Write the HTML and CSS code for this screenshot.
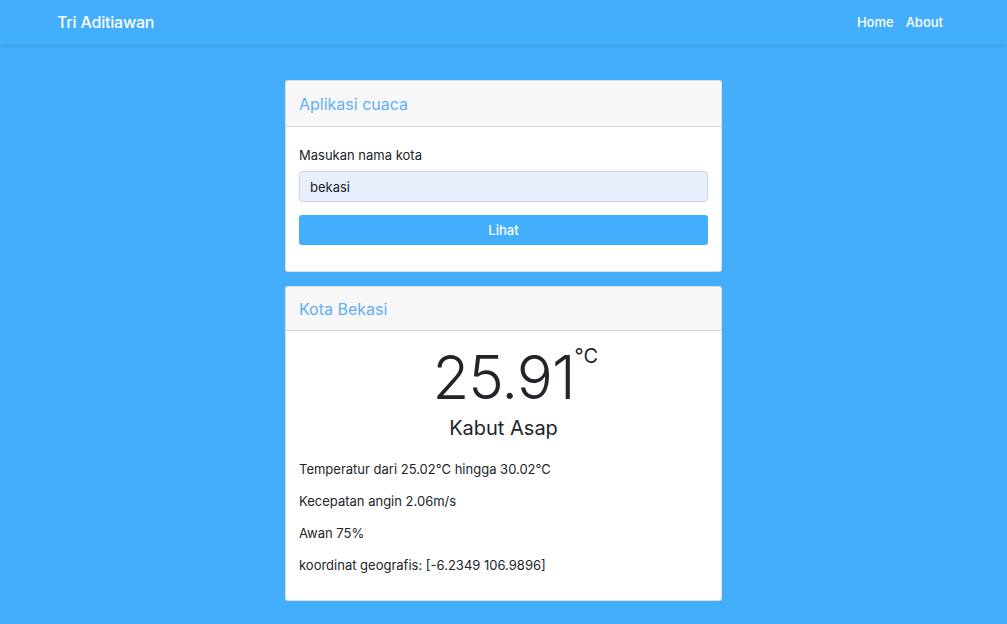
FILE: index.html
```html
<!DOCTYPE html>
<html lang="id">
<head>
<meta charset="utf-8">
<title>Aplikasi cuaca</title>
<link rel="stylesheet" href="styles.css">
</head>
<body>
<nav class="navbar">
  <div class="nav-inner">
    <a class="brand" href="#">Tri Aditiawan</a>
    <div class="nav-links">
      <a href="#">Home</a>
      <a href="#">About</a>
    </div>
  </div>
</nav>
<main class="main">
  <section class="card">
    <div class="card-header">Aplikasi cuaca</div>
    <div class="card-body form-body">
      <label class="label" for="kota">Masukan nama kota</label>
      <input class="input" id="kota" type="text" value="bekasi">
      <button class="btn" type="button">Lihat</button>
    </div>
  </section>
  <section class="card">
    <div class="card-header card-header-sm">Kota Bekasi</div>
    <div class="card-body result-body">
      <div class="temp"><span class="temp-value">25.91<span class="unit">°C</span></span></div>
      <div class="desc">Kabut Asap</div>
      <p class="info">Temperatur dari 25.02°C hingga 30.02°C</p>
      <p class="info">Kecepatan angin 2.06m/s</p>
      <p class="info">Awan 75%</p>
      <p class="info">koordinat geografis: [-6.2349 106.9896]</p>
    </div>
  </section>
</main>
</body>
</html>
```
FILE: styles.css
```css
* { box-sizing: border-box; }
html, body { margin: 0; }
body {
  background: #43aefb;
  font-family: Inter, "Noto Sans", sans-serif;
  color: #212529;
  font-size: 13px;
  height: 624px;
  overflow: hidden;
}
.navbar {
  height: 44px;
  background: #43aefb;
  box-shadow: 0 2px 4px rgba(0, 0, 0, 0.08);
}
.nav-inner {
  height: 100%;
  padding: 0 64px 0 57px;
  display: flex;
  align-items: center;
  justify-content: space-between;
}
.brand {
  color: #fff;
  text-decoration: none;
  font-size: 16px;
  font-weight: 500;
  letter-spacing: -0.2px;
}
.nav-links { display: flex; gap: 12px; }
.nav-links a {
  color: #fff;
  text-decoration: none;
  font-size: 13px;
  font-weight: 500;
}
.main {
  width: 437px;
  margin: 36px auto 0;
  display: flex;
  flex-direction: column;
  gap: 14px;
}
.card {
  background: #fff;
  border: 1px solid rgba(0, 0, 0, 0.13);
  border-radius: 3px;
}
.card-header {
  height: 46px;
  background: #f7f7f7;
  border-bottom: 1px solid rgba(0, 0, 0, 0.13);
  padding: 0 13px;
  display: flex;
  align-items: center;
  color: #5eb0f8;
  font-size: 16px;
  border-radius: 3px 3px 0 0;
}
.card-header-sm { height: 44px; }
.card-body { padding: 0 13px; }
.form-body {
  display: flex;
  flex-direction: column;
  padding-top: 19px;
  padding-bottom: 26px;
}
.label { line-height: 19px; margin-bottom: 6px; }
.input {
  height: 31px;
  border: 1px solid #ced4da;
  border-radius: 4px;
  background: #e8f0fe;
  padding: 0 10px;
  font: inherit;
  color: #212529;
  margin-bottom: 13px;
}
.btn {
  height: 30px;
  border: 0;
  border-radius: 3px;
  background: #43aefb;
  color: #fff;
  font: inherit;
  font-weight: 500;
}
.result-body { padding-top: 16px; padding-bottom: 12px; }
.temp { text-align: center; line-height: 60px; height: 60px; }
.temp-value {
  display: inline-block;
  position: relative;
  font-size: 60px;
  line-height: 60px;
  font-weight: 300;
  letter-spacing: -1px;
}
.unit {
  position: absolute;
  left: 100%;
  top: -3px;
  font-size: 20px;
  line-height: normal;
  font-weight: 400;
  letter-spacing: 0;
}
.desc {
  text-align: center;
  font-size: 20px;
  line-height: 24px;
  margin-top: 9px;
  margin-bottom: 20px;
}
.info {
  margin: 0 0 12.5px;
  line-height: 19.5px;
}
```
